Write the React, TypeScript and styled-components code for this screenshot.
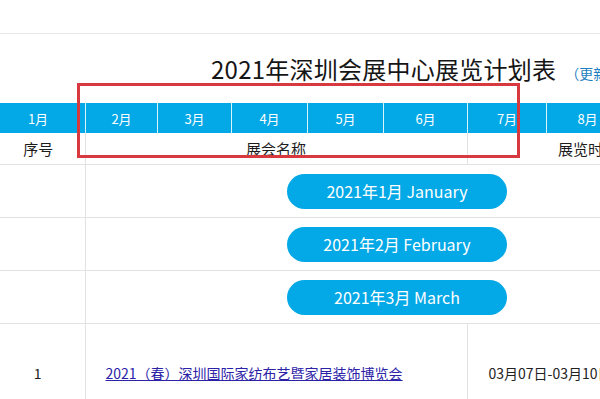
import React from "react";
import styled, { createGlobalStyle } from "styled-components";

const Global = createGlobalStyle`
  html, body { margin: 0; padding: 0; background: #fff; }
  body { font-family: "Noto Sans CJK SC", "Noto Sans", sans-serif; overflow: hidden; }
`;

const Page = styled.div`
  position: relative;
  width: 600px;
  height: 399px;
  overflow: hidden;
`;

const TopStrip = styled.div`
  height: 33px;
  border-bottom: 1px solid #e8e8e8;
`;

const TitleRow = styled.div`
  height: 69px;
  box-sizing: border-box;
  padding: 19px 0 0 211px;
  display: flex;
  align-items: baseline;
  white-space: nowrap;
`;

const Title = styled.h1`
  margin: 0;
  font-size: 24px;
  line-height: 32px;
  font-weight: 400;
  color: #151515;
  letter-spacing: 0.25px;
`;

const Updated = styled.span`
  margin-left: 9px;
  font-size: 14px;
  color: #1f7fc0;
`;

const MonthBar = styled.nav`
  display: grid;
  grid-template-columns: 85px 72px 74px 76px 76px 84px 79px 82px 80px;
  height: 30px;
  background: #03a8e6;
  width: 708px;
`;

const Month = styled.div<{ $first?: boolean }>`
  display: flex;
  align-items: center;
  justify-content: center;
  color: #fff;
  font-size: 13px;
  padding-right: ${(p) => (p.$first ? "9px" : "0")};
  border-left: ${(p) => (p.$first ? "none" : "1px solid rgba(255,255,255,0.85)")};
`;

const Table = styled.table`
  border-collapse: collapse;
  table-layout: fixed;
  width: 709px;
`;

const Cell = styled.td<{ $align?: string; $pad?: string }>`
  border: 1px solid #e2e2e2;
  border-top: none;
  padding: ${(p) => p.$pad || "0"};
  text-align: ${(p) => p.$align || "center"};
  color: #222;
  font-size: 14px;
  vertical-align: middle;
  &:first-child { border-left: none; padding-right: 9px; }
`;

const HeadCell = styled.th`
  border: 1px solid #e2e2e2;
  border-top: none;
  height: 31px;
  padding: 0;
  font-weight: 400;
  font-size: 15px;
  color: #1c1c1c;
  &:first-child { border-left: none; padding-right: 8px; }
`;

const MonthRow = styled.tr`
  height: 53px;
`;

const Pill = styled.div`
  margin: 0 auto;
  width: 220px;
  height: 35px;
  border-radius: 18px;
  background: #03a8e6;
  color: #fff;
  font-size: 16px;
  line-height: 35px;
  text-align: center;
  white-space: nowrap;
`;

const DataRow = styled.tr`
  height: 98px;
`;

const ExpoLink = styled.a`
  color: #2b22a8;
  text-decoration: underline;
  font-size: 14px;
  white-space: nowrap;
`;

const DateText = styled.span`
  color: #222;
  font-size: 14px;
  white-space: nowrap;
`;

const Highlight = styled.div`
  position: absolute;
  left: 77px;
  top: 83px;
  width: 437px;
  height: 69px;
  border: 3px solid #d8393e;
  pointer-events: none;
`;

const months = ["1月", "2月", "3月", "4月", "5月", "6月", "7月", "8月", "9月"];
const monthRows = ["2021年1月 January", "2021年2月 February", "2021年3月 March"];

export default function App() {
  return (
    <Page>
      <Global />
      <TopStrip />
      <TitleRow>
        <Title>2021年深圳会展中心展览计划表</Title>
        <Updated>（更新时间：2021年）</Updated>
      </TitleRow>
      <MonthBar>
        {months.map((m, i) => (
          <Month key={m} $first={i === 0}>{m}</Month>
        ))}
      </MonthBar>
      <Table>
        <colgroup>
          <col style={{ width: 85 }} />
          <col style={{ width: 382 }} />
          <col style={{ width: 242 }} />
        </colgroup>
        <thead>
          <tr>
            <HeadCell>序号</HeadCell>
            <HeadCell>展会名称</HeadCell>
            <HeadCell>展览时间</HeadCell>
          </tr>
        </thead>
        <tbody>
          {monthRows.map((r) => (
            <MonthRow key={r}>
              <Cell />
              <Cell colSpan={2}>
                <Pill>{r}</Pill>
              </Cell>
            </MonthRow>
          ))}
          <DataRow>
            <Cell>1</Cell>
            <Cell $align="left" $pad="0 0 0 20px">
              <ExpoLink href="#">2021（春）深圳国际家纺布艺暨家居装饰博览会</ExpoLink>
            </Cell>
            <Cell $align="left" $pad="0 0 0 21px">
              <DateText>03月07日-03月10日</DateText>
            </Cell>
          </DataRow>
        </tbody>
      </Table>
      <Highlight />
    </Page>
  );
}
